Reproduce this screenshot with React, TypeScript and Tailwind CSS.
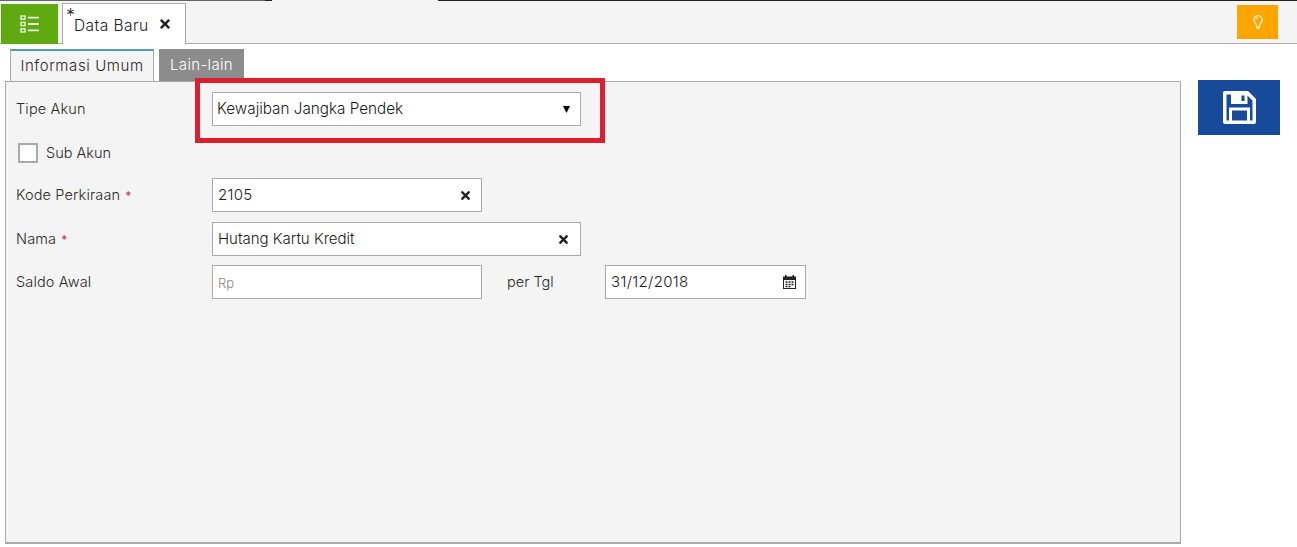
import type { ReactNode } from "react";
import { FaRegLightbulb, FaTimes } from "react-icons/fa";

function ListIcon() {
  return (
    <svg width="20" height="18" viewBox="0 0 20 18" fill="none" stroke="#e9f3dc">
      <rect x="1" y="1" width="4" height="3.2" strokeWidth="1.4" />
      <rect x="1" y="7.4" width="4" height="3.2" strokeWidth="1.4" />
      <rect x="1" y="13.8" width="4" height="3.2" strokeWidth="1.4" />
      <path d="M8 2.6h11M8 9h11M8 15.4h11" strokeWidth="1.8" />
    </svg>
  );
}

function SaveIcon() {
  return (
    <svg width="33" height="33" viewBox="0 0 33 33" fill="#fff">
      <path
        fillRule="evenodd"
        d="M2 0H25L33 8V31a2 2 0 0 1-2 2H2a2 2 0 0 1-2-2V2a2 2 0 0 1 2-2ZM3.5 3.5V29.5H6V16.5H27V29.5H29.5V9.5L24.5 4.5V13H8V3.5ZM9 19.5V29.5H24V19.5ZM18.5 4.5H21.5V10H18.5Z"
      />
    </svg>
  );
}

function CalendarIcon() {
  return (
    <svg width="13" height="14" viewBox="0 0 13 14" fill="#222">
      <path fillRule="evenodd" d="M0 1.5H2V0H3.5V1.5H9.5V0H11V1.5H13V14H0ZM1 5V13H12V5Z" />
      <path d="M2.5 6.2h2v1.5h-2zM5.5 6.2h2v1.5h-2zM8.5 6.2h2v1.5h-2zM2.5 8.7h2v1.5h-2zM5.5 8.7h2v1.5h-2zM8.5 8.7h2v1.5h-2zM2.5 11h2v1.2h-2zM5.5 11h2v1.2h-2z" />
    </svg>
  );
}

function Label({ children, required }: { children: string; required?: boolean }) {
  return (
    <div className="w-[206px] shrink-0 pl-[10px] text-[14.5px] tracking-[0.15px] text-[#2a2a2a]">
      {children}
      {required ? <span className="ml-[5px] text-[12px] text-[#c00]">*</span> : null}
    </div>
  );
}

function Field({ className, children }: { className: string; children: ReactNode }) {
  return (
    <div className={`flex h-[34px] items-center justify-between border border-[#aaa] bg-white text-[15px] text-[#1a1a1a] ${className}`}>
      {children}
    </div>
  );
}

export default function App() {
  return (
    <div className="flex h-[547px] w-[1297px] flex-col overflow-hidden bg-white font-['Inter',sans-serif] font-light">
      <div className="flex h-[44px] shrink-0 flex-col border-b border-b-[#aaa] bg-[#f4f4f4]">
        <div className="flex h-px shrink-0">
          <div className="w-[265px] bg-[#666]" />
          <div className="w-[7px] bg-[#222]" />
          <div className="w-[166px]" />
          <div className="flex-1 bg-[#222]" />
        </div>
        <div className="flex flex-1 items-end gap-[4px] pl-[1px] pr-[19px]">
          <div className="mb-[-1px] flex h-[40px] w-[57px] items-center justify-center bg-[#5fa911]">
            <ListIcon />
          </div>
          <div className="mb-[-1px] flex h-[41px] w-[124px] items-center border border-b-0 border-[#aaa] bg-white pl-[3px] text-[15.5px] tracking-[0.45px] text-[#222]">
            <span className="w-[8px] self-start pt-[3px] text-[18px] leading-none">*</span>
            <span className="mt-[3px]">Data Baru</span>
            <FaTimes size={14} className="ml-[9px]" />
          </div>
          <div className="mb-[4px] ml-auto flex h-[34px] w-[41px] items-center justify-center bg-[#ffa500] text-[#ffeec4]">
            <FaRegLightbulb size={14} />
          </div>
        </div>
      </div>
      <div className="flex min-h-0 flex-1 gap-[17px] pb-[3px] pl-[5px]">
        <div className="flex w-[1176px] flex-col">
          <div className="mt-[5px] flex h-[32px] shrink-0 items-end gap-[5px] pl-[5px]">
            <div className="mb-[-1px] flex h-[33px] w-[144px] items-center justify-center border border-t-2 border-b-0 border-[#aaa] border-t-[#4a9fb5] bg-[#f4f4f4] text-[15px] tracking-[0.6px] text-[#2a2a2a]">
              Informasi Umum
            </div>
            <div className="flex h-[32px] w-[85px] items-center justify-center bg-[#8c8c8c] pt-[1px] text-[15px] tracking-[0.35px] text-white">
              Lain-lain
            </div>
          </div>
          <div className="flex min-h-0 flex-1 flex-col border border-b-2 border-[#aaa] bg-[#f4f4f4] pt-[10px]">
            <div className="flex items-center">
              <Label>Tipe Akun</Label>
              <Field className="w-[369px] pl-[4px] pr-[10px]">
                <span className="text-[15.25px]">Kewajiban Jangka Pendek</span>
                <svg width="7" height="7" viewBox="0 0 7 7" fill="#000">
                  <path d="M0 0h7L3.5 7Z" />
                </svg>
              </Field>
            </div>
            <div className="ml-[12px] mt-[10px] flex h-[33px] items-center gap-[8px] text-[14.5px] text-[#2a2a2a]">
              <span className="size-[20px] border-2 border-[#aaa] bg-white" />
              Sub Akun
            </div>
            <div className="mt-[9px] flex items-center">
              <Label required>Kode Perkiraan</Label>
              <Field className="w-[270px] pl-[5px] pr-[9px]">
                <span className="tracking-[0.3px]">2105</span>
                <FaTimes size={13} className="text-[#222]" />
              </Field>
            </div>
            <div className="mt-[10px] flex items-center">
              <Label required>Nama</Label>
              <Field className="w-[369px] pl-[5px] pr-[10px]">
                Hutang Kartu Kredit
                <FaTimes size={13} className="text-[#222]" />
              </Field>
            </div>
            <div className="mt-[9px] flex items-center">
              <Label>Saldo Awal</Label>
              <Field className="w-[270px] pl-[5px]">
                <span className="pt-[3px] text-[13px] text-[#888]">Rp</span>
              </Field>
              <span className="ml-[25px] w-[98px] text-[14.5px] text-[#2a2a2a]">per Tgl</span>
              <Field className="w-[201px] pl-[5px] pr-[9px]">
                <span className="tracking-[0.35px]">31/12/2018</span>
                <CalendarIcon />
              </Field>
            </div>
          </div>
        </div>
        <div className="mt-[36px] flex h-[55px] w-[82px] items-center justify-center bg-[#174a9b]">
          <SaveIcon />
        </div>
      </div>
      <div className="pointer-events-none absolute left-[195px] top-[78px] h-[65px] w-[410px] border-[5px] border-[#dc1f2e]" />
    </div>
  );
}
